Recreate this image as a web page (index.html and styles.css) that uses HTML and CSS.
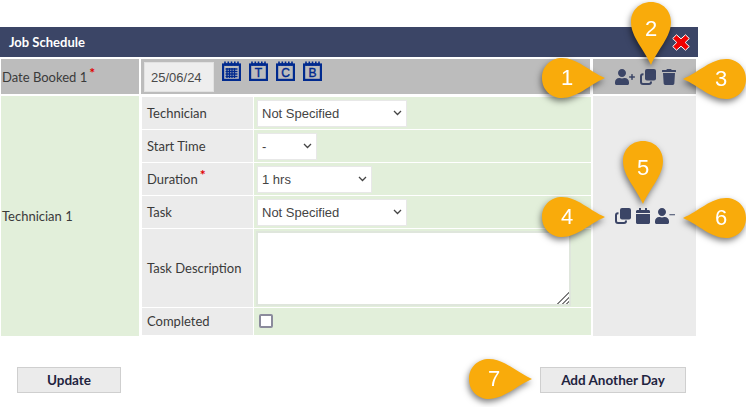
FILE: index.html
```html
<!DOCTYPE html>
<html lang="en">
<head>
<meta charset="utf-8">
<title>Job Schedule</title>
<link rel="stylesheet" href="styles.css">
</head>
<body>
<svg class="defs" width="0" height="0" aria-hidden="true">
  <defs>
    <path id="tear" d="M0 20C0 8 9 0 20 0C35 0 47 13 63 20C47 27 35 40 20 40C9 40 0 32 0 20Z"/>
    <path id="i-user-plus" d="M624 230h-56v-56c0-8.800-7.200-16-16-16h-16c-8.800 0-16 7.200-16 16v56h-56c-8.800 0-16 7.200-16 16v16c0 8.800 7.200 16 16 16h56v56c0 8.800 7.200 16 16 16h16c8.800 0 16-7.200 16-16v-56h56c8.800 0 16-7.200 16-16v-16c0-8.800-7.200-16-16-16zm-400 26c70.700 0 128-57.300 128-128S294.700 0 224 0 96 57.300 96 128s57.300 128 128 128zm89.600 32h-16.700c-22.200 10.200-46.900 16-72.900 16s-50.600-5.800-72.900-16h-16.700C60.200 288 0 348.200 0 422.400V464c0 26.500 21.500 48 48 48h352c26.500 0 48-21.500 48-48v-41.600c0-74.200-60.200-134.400-134.400-134.400z"/>
    <path id="i-user-minus" d="M630 196H470c-6 0-10 4-10 10v18c0 6 4 10 10 10h160c6 0 10-4 10-10v-18c0-6-4-10-10-10zM224 256c70.700 0 128-57.300 128-128S294.700 0 224 0 96 57.300 96 128s57.300 128 128 128zm89.600 32h-16.700c-22.200 10.200-46.900 16-72.900 16s-50.600-5.800-72.900-16h-16.700C60.200 288 0 348.200 0 422.400V464c0 26.500 21.500 48 48 48h352c26.500 0 48-21.500 48-48v-41.600c0-74.200-60.200-134.400-134.400-134.400z"/>
    <g id="i-clone">
      <rect x="5" y="0" width="11" height="11.500" rx="2"/>
      <path d="M3.500 5.200H3a2 2 0 0 0-2 2V13a2 2 0 0 0 2 2h6a2 2 0 0 0 2-2v-.5" fill="none" stroke="#3b4566" stroke-width="2"/>
    </g>
    <path id="i-trash" d="M432 32H312l-9.400-18.700A24 24 0 0 0 281.100 0H166.800a23.720 23.720 0 0 0-21.400 13.300L136 32H16A16 16 0 0 0 0 48v32a16 16 0 0 0 16 16h416a16 16 0 0 0 16-16V48a16 16 0 0 0-16-16zM53.200 467a48 48 0 0 0 47.900 45h245.800a48 48 0 0 0 47.900-45L416 128H32z"/>
    <path id="i-calendar" d="M12 192h424c6.600 0 12 5.400 12 12v260c0 26.500-21.500 48-48 48H48c-26.500 0-48-21.500-48-48V204c0-6.600 5.400-12 12-12zm436-44v-36c0-26.500-21.500-48-48-48h-48V12c0-6.600-5.400-12-12-12h-40c-6.600 0-12 5.400-12 12v52H160V12c0-6.600-5.400-12-12-12h-40c-6.600 0-12 5.400-12 12v52H48C21.500 64 0 85.500 0 112v36c0 6.600 5.400 12 12 12h424c6.600 0 12-5.400 12-12z"/>
    <g id="cal-frame">
      <rect x="1.100" y="3.500" width="16.800" height="15.400" fill="none" stroke="#002a8f" stroke-width="2.200"/>
      <path d="M2.500 3.500h14" stroke="#002a8f" stroke-width="2.500"/>
      <path d="M3 .5v4M6.300 .5v4M9.500 .5v4M12.800 .5v4M16 .5v4" stroke="#002a8f" stroke-width="1.600"/>
    </g>
  </defs>
</svg>

<main class="page">
  <header class="title-bar">
    <h1 class="title">Job Schedule</h1>
    <svg class="close-x" viewBox="0 0 18 17" width="18" height="17" aria-label="Close">
      <path d="M4.500 .8L9 4.800 13.500 .8 17.300 4.500 13.200 8.500 17.300 12.500 13.500 16.200 9 12.200 4.500 16.200 .7 12.500 4.800 8.500 .7 4.500Z" fill="#f00000" stroke="#fff" stroke-width="1" stroke-linejoin="round"/>
    </svg>
  </header>

  <section class="grid-row grid-row-date">
    <div class="cell-grey label-cell">Date Booked 1<span class="req">*</span></div>
    <div class="cell-grey date-cell">
      <input class="date-input" type="text" value="25/06/24" readonly>
      <div class="cal-set">
        <svg class="cal" viewBox="0 0 19 20" width="19" height="20"><use href="#cal-frame"/><path d="M3.500 8h12M3.500 10.500h12M3.500 13h12M3.500 15.500h12M5 7v10M7.500 7v10M10 7v10M12.500 7v10" stroke="#002a8f" stroke-width="1.300"/></svg>
        <svg class="cal" viewBox="0 0 19 20" width="19" height="20"><use href="#cal-frame"/><text class="cal-letter" x="9.500" y="16">T</text></svg>
        <svg class="cal" viewBox="0 0 19 20" width="19" height="20"><use href="#cal-frame"/><text class="cal-letter" x="9.500" y="16">C</text></svg>
        <svg class="cal" viewBox="0 0 19 20" width="19" height="20"><use href="#cal-frame"/><text class="cal-letter" x="9.500" y="16">B</text></svg>
      </div>
    </div>
    <div class="cell-grey actions">
      <svg class="ico" viewBox="0 0 640 512" width="20" height="16"><use href="#i-user-plus"/></svg>
      <svg class="ico" viewBox="0 0 16 16" width="16" height="16"><use href="#i-clone"/></svg>
      <svg class="ico ico-trash" viewBox="0 0 448 512" width="14" height="16"><use href="#i-trash"/></svg>
    </div>
  </section>

  <section class="grid-row grid-row-tech">
    <div class="cell-green label-cell">Technician 1</div>
    <div class="fields">
      <div class="field-label">Technician</div>
      <div class="field-value"><select class="sel sel-wide"><option>Not Specified</option></select></div>
      <div class="field-label">Start Time</div>
      <div class="field-value"><select class="sel sel-small"><option>-</option></select></div>
      <div class="field-label">Duration<span class="req">*</span></div>
      <div class="field-value"><select class="sel sel-mid"><option>1 hrs</option></select></div>
      <div class="field-label">Task</div>
      <div class="field-value"><select class="sel sel-wide"><option>Not Specified</option></select></div>
      <div class="field-label">Task Description</div>
      <div class="field-value"><textarea class="desc"></textarea></div>
      <div class="field-label field-label-last">Completed</div>
      <div class="field-value"><input class="check" type="checkbox"></div>
    </div>
    <div class="cell-light actions">
      <svg class="ico" viewBox="0 0 16 16" width="16" height="16"><use href="#i-clone"/></svg>
      <svg class="ico" viewBox="0 0 448 512" width="14" height="16"><use href="#i-calendar"/></svg>
      <svg class="ico" viewBox="0 0 640 512" width="20" height="16"><use href="#i-user-minus"/></svg>
    </div>
  </section>

  <footer class="buttons">
    <button class="btn btn-update" type="button">Update</button>
    <button class="btn btn-add" type="button">Add Another Day</button>
  </footer>
</main>

<div class="pin pin-1"><svg viewBox="0 0 63 40" width="63" height="40"><use href="#tear"/></svg><span class="num">1</span></div>
<div class="pin pin-2"><svg viewBox="0 0 40 63" width="40" height="63"><use href="#tear" transform="translate(40 0) rotate(90)"/></svg><span class="num num-v">2</span></div>
<div class="pin pin-3"><svg viewBox="0 0 63 40" width="63" height="40"><use href="#tear" transform="translate(63 0) scale(-1 1)"/></svg><span class="num num-l">3</span></div>
<div class="pin pin-4"><svg viewBox="0 0 63 40" width="63" height="40"><use href="#tear"/></svg><span class="num">4</span></div>
<div class="pin pin-5"><svg viewBox="0 0 40 63" width="40" height="63"><use href="#tear" transform="translate(40 0) rotate(90)"/></svg><span class="num num-v">5</span></div>
<div class="pin pin-6"><svg viewBox="0 0 63 40" width="63" height="40"><use href="#tear" transform="translate(63 0) scale(-1 1)"/></svg><span class="num num-l">6</span></div>
<div class="pin pin-7"><svg viewBox="0 0 63 40" width="63" height="40"><use href="#tear"/></svg><span class="num">7</span></div>
</body>
</html>
```

FILE: styles.css
```css
* { box-sizing: border-box; }

html, body { margin: 0; padding: 0; background: #fff; }

body {
  position: relative;
  width: 746px;
  height: 407px;
  overflow: hidden;
  font-family: Lato, "Liberation Sans", sans-serif;
  font-size: 13px;
  color: #3a3a3a;
}

.defs { position: absolute; }

.page {
  width: 698px;
  padding-top: 27px;
  display: flex;
  flex-direction: column;
  gap: 2px;
}

.title-bar {
  height: 30px;
  background: #3b4566;
  display: flex;
  align-items: center;
  justify-content: space-between;
  padding: 0 8px 0 9px;
}

.title {
  margin: 0;
  font-size: 13px;
  font-weight: 700;
  color: #fff;
}

.close-x { margin-top: 1px; }

.grid-row {
  display: grid;
  grid-template-columns: 138px 449px 104px;
  column-gap: 2px;
  margin-left: 1px;
}

.grid-row-date { height: 35px; }
.grid-row-tech { height: 240px; }

.grid-row > :last-child { margin-left: 1px; }

.cell-grey { background: #bcbcbc; }
.cell-green { background: #e2efda; }
.cell-light { background: #ebebeb; }

.label-cell {
  display: flex;
  align-items: center;
  padding-left: 1px;
  white-space: nowrap;
}

.req {
  color: #e00000;
  font-weight: 700;
  font-size: 14px;
  margin: -9px 0 0 2px;
}

.date-cell {
  display: flex;
  align-items: flex-start;
  padding: 2px 0 0 3px;
}

.date-input {
  width: 70px;
  height: 30px;
  margin: 1px 0 0 0;
  padding: 0 0 0 6px;
  border: 1px solid #e2e2e2;
  background: #eeeeee;
  font-family: "Liberation Sans", sans-serif;
  font-size: 13px;
  color: #4a4a4a;
  outline: none;
}

.cal-set {
  display: flex;
  gap: 8px;
  margin-left: 8px;
}

.cal-letter {
  font-family: "Liberation Sans", sans-serif;
  font-size: 12px;
  fill: #002a8f;
  stroke: #002a8f;
  stroke-width: .4px;
  text-anchor: middle;
}

.actions {
  display: flex;
  align-items: center;
  justify-content: center;
  gap: 5px;
}

.ico { fill: #3b4566; display: block; }
.ico-trash { margin: 0 -1px 0 1px; }

.fields {
  display: grid;
  grid-template-columns: 111px 337px;
  grid-template-rows: 32px 32px 32px 32px 78px 27px;
  gap: 1px;
  padding: 1px 0 0 1px;
  background: #fff;
  align-content: start;
}

.field-label {
  background: #ebebeb;
  display: flex;
  align-items: center;
  padding-left: 5px;
  white-space: nowrap;
}

.field-label-last { padding-bottom: 2px; }

.field-value {
  background: #e2efda;
  display: flex;
  align-items: center;
  padding-left: 3px;
}

.sel {
  appearance: none;
  height: 27px;
  padding: 0 0 0 4px;
  border: 1px solid #e8e8e8;
  border-radius: 0;
  background-color: #fff;
  background-image: url("data:image/svg+xml,%3Csvg xmlns='http://www.w3.org/2000/svg' width='9' height='6'%3E%3Cpath d='M1 1l3.500 3.500L8 1' fill='none' stroke='%23444' stroke-width='1.300'/%3E%3C/svg%3E");
  background-repeat: no-repeat;
  background-position: right 4px center;
  font-family: "Liberation Sans", sans-serif;
  font-size: 13px;
  color: #444;
}

.sel-wide { width: 150px; }
.sel-small { width: 60px; }
.sel-mid { width: 115px; }

.desc {
  display: block;
  width: 315px;
  height: 75px;
  margin-left: -1px;
  border: 2px solid #dfe6dc;
  background: #fff;
  outline: none;
}

.desc::-webkit-resizer {
  background:
    linear-gradient(135deg, #fff 52%, transparent 52%),
    repeating-linear-gradient(135deg, #fff 0 2px, #808080 2px 3.400px);
}

.check {
  appearance: none;
  width: 14px;
  height: 14px;
  margin: -2px 0 0 2px;
  background: #fff;
  border: 2px solid #8b8b9c;
  border-radius: 2px;
}

.buttons {
  display: flex;
  justify-content: space-between;
  padding: 0 12px 0 17px;
  margin-top: 29px;
}

.btn {
  height: 26px;
  padding: 0;
  background: #ebebeb;
  border: 1px solid #cfcfcf;
  font-family: Lato, sans-serif;
  font-size: 13.500px;
  font-weight: 700;
  color: #1f2440;
}

.btn-update { width: 104px; }
.btn-add { width: 146px; }

.pin {
  position: absolute;
  z-index: 2;
  filter: drop-shadow(-1px 3px 3px rgba(0, 0, 0, .5));
}

.pin svg { display: block; fill: #f9ab0b; }

.num {
  position: absolute;
  top: 0;
  left: 5px;
  font-family: "Liberation Sans", sans-serif;
  font-size: 22px;
  line-height: 40px;
  width: 40px;
  text-align: center;
  color: #fff;
}

.num-l { left: 18px; }
.num-v { left: 0; top: 7px; }

.pin-1 { left: 542px; top: 58px; }
.pin-2 { left: 631px; top: 2px; }
.pin-3 { left: 683px; top: 59px; }
.pin-4 { left: 542px; top: 197px; }
.pin-5 { left: 623px; top: 141px; }
.pin-6 { left: 683px; top: 198px; }
.pin-7 { left: 469px; top: 359px; }
```
